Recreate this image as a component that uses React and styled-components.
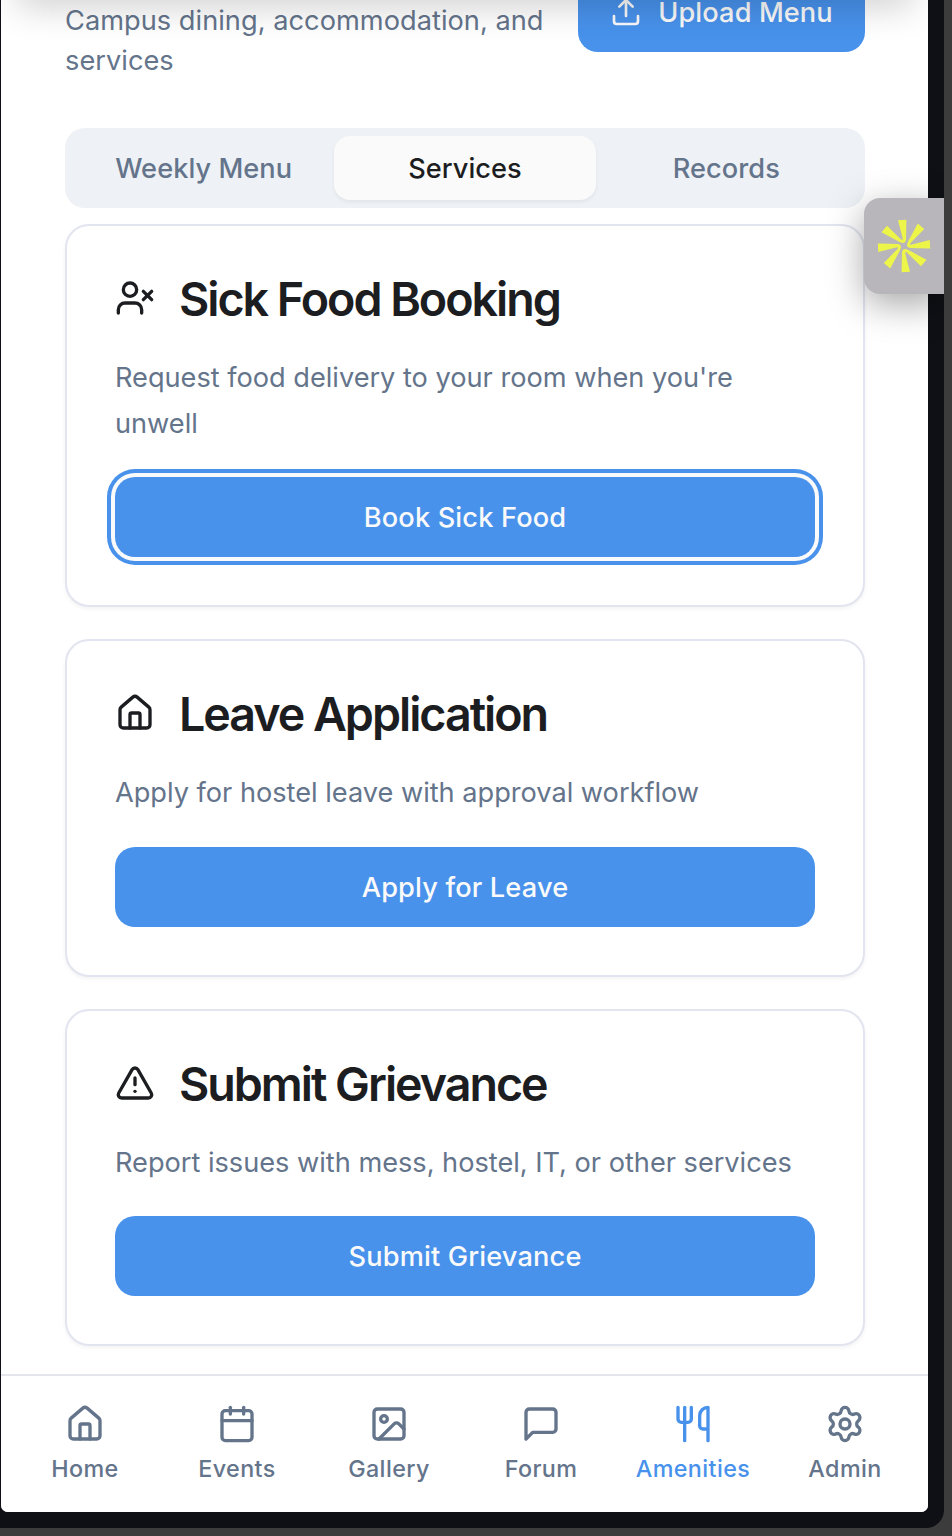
import React from "react";
import styled, { createGlobalStyle } from "styled-components";
import { House, Calendar, Image, Utensils, Settings, UserX, TriangleAlert, Upload } from "lucide-react";

const Global = createGlobalStyle`
  *, *::before, *::after { box-sizing: border-box; }
  html, body { margin: 0; height: 1536px; overflow: hidden; background: #3c3c3c; }
  body { font-family: Inter, "Liberation Sans", sans-serif; -webkit-font-smoothing: antialiased; }
  button { font-family: inherit; cursor: pointer; }
`;

const Stage = styled.main`
  position: relative;
  width: 952px;
  height: 1536px;
  overflow: hidden;
`;

const Device = styled.div`
  width: 944px;
  height: 1528px;
  padding: 0 16px 16px 1px;
  background: #0f1015;
  border-radius: 0 0 18px 0;
`;

const Screen = styled.div`
  position: relative;
  display: flex;
  flex-direction: column;
  height: 1512px;
  background: #fff;
  border-radius: 0 0 7px 7px;
  overflow: hidden;
`;

const HeaderShade = styled.div`
  position: absolute;
  top: -40px;
  left: 16px;
  width: 896px;
  height: 40px;
  box-shadow: 0 6px 36px rgba(0, 0, 0, 0.2);
`;

const Content = styled.div`
  flex: 1;
  padding: 0 63px 0 64px;
`;

const Intro = styled.header`
  display: flex;
  justify-content: space-between;
  align-items: flex-start;
  height: 128px;
`;

const Subtitle = styled.p`
  margin: 0;
  padding-top: 1px;
  width: 490px;
  font-size: 27.2px;
  line-height: 40px;
  letter-spacing: 0.03px;
  color: #64748b;
`;

const UploadButton = styled.button`
  display: flex;
  align-items: center;
  justify-content: center;
  gap: 16px;
  width: 287px;
  height: 80px;
  margin-top: -28px;
  padding: 0;
  border: 0;
  border-radius: 20px;
  background: #4892ec;
  color: #fafafa;
  font-size: 27.2px;
  font-weight: 500;
  line-height: 24px;
`;

const Tabs = styled.nav`
  display: grid;
  grid-template-columns: repeat(3, 1fr);
  height: 80px;
  padding: 8px;
  margin-bottom: 16px;
  border-radius: 20px;
  background: #eef1f6;
`;

const Tab = styled.button`
  padding: 0;
  border: 0;
  border-radius: 16px;
  font-size: 27.2px;
  font-weight: 500;
  background: ${(p) => (p.$active ? "#fafafa" : "transparent")};
  color: ${(p) => (p.$active ? "#1c1d21" : "#64748b")};
  box-shadow: ${(p) => (p.$active ? "0 2px 4px rgba(0, 0, 0, 0.06)" : "none")};
`;

const Cards = styled.div`
  display: flex;
  flex-direction: column;
  gap: 32px;
`;

const Card = styled.section`
  padding: 48px;
  border: 2px solid #e2e5f0;
  border-radius: 24px;
  background: #fff;
  box-shadow: 0 2px 4px rgba(0, 0, 0, 0.05);
`;

const CardTitle = styled.h2`
  display: flex;
  align-items: center;
  gap: 24px;
  height: 48px;
  margin: 0 0 32px;
  font-size: 46.6px;
  line-height: 48px;
  font-weight: 600;
  color: #1c1d21;
`;

const Label = styled.span`
  padding-top: ${(p) => p.$drop || 0}px;
  letter-spacing: ${(p) => p.$track || 0}px;
  white-space: nowrap;
`;

const Description = styled.p`
  margin: 0 0 31px;
  padding-top: 1px;
  font-size: 27.2px;
  line-height: 45.5px;
  letter-spacing: -0.02px;
  color: #64748b;
`;

const Action = styled.button`
  display: block;
  width: 100%;
  height: 80px;
  padding: 1px 0 0;
  border: 0;
  border-radius: 20px;
  background: #4892ec;
  color: #fafafa;
  font-size: 27.2px;
  font-weight: 500;
  box-shadow: ${(p) => (p.$focused ? "0 0 0 4px #fafafa, 0 0 0 8px #4892ec" : "none")};
`;

const BottomBar = styled.nav`
  display: grid;
  grid-template-columns: repeat(6, 152px);
  height: 138px;
  padding: 28px 7px 0 8px;
  border-top: 2px solid #e5e6ec;
  background: #fff;
`;

const NavItem = styled.a`
  display: flex;
  flex-direction: column;
  align-items: center;
  gap: 9px;
  font-size: 23.3px;
  line-height: 32px;
  font-weight: 500;
  color: ${(p) => (p.$active ? "#4892ec" : "#64748b")};
`;

const Widget = styled.aside`
  position: absolute;
  top: 198px;
  left: 864px;
  display: flex;
  align-items: center;
  justify-content: center;
  width: 80px;
  height: 96px;
  border-radius: 16px 0 0 16px;
  background: #b8b6ba;
  box-shadow: 0 10px 36px rgba(0, 0, 0, 0.35);
  clip-path: inset(-60px 0 -80px -60px);
`;

const MessageIcon = () => (
  <svg width="40" height="40" viewBox="0 0 24 24" fill="none" stroke="currentColor" strokeWidth="2" strokeLinecap="round" strokeLinejoin="round">
    <path d="M21 15a2 2 0 0 1-2 2H7l-4 4V5a2 2 0 0 1 2-2h14a2 2 0 0 1 2 2z" />
  </svg>
);

const Burst = () => (
  <svg width="54" height="54" viewBox="0 0 54 54" fill="#edf549">
    {[0, 90, 180, 270].map((a) => (
      <path key={a} transform={`rotate(${a} 27 27)`} d="M21 1.300 L29.400 0.800 L29 20.800 Q28.500 24.200 25.500 24 L22.500 22.900 L4.500 13.200 L10 6.800 L23.800 20.300 Q26.200 22 25.600 19 Z" />
    ))}
  </svg>
);

const services = [
  { icon: UserX, title: "Sick Food Booking", text: "Request food delivery to your room when you're unwell", action: "Book Sick Food", focused: true },
  { icon: House, title: "Leave Application", text: "Apply for hostel leave with approval workflow", action: "Apply for Leave" },
  { icon: TriangleAlert, title: "Submit Grievance", text: "Report issues with mess, hostel, IT, or other services", action: "Submit Grievance" },
];

const destinations = [
  ["Home", House],
  ["Events", Calendar],
  ["Gallery", Image],
  ["Forum", MessageIcon],
  ["Amenities", Utensils],
  ["Admin", Settings],
];

export default function App() {
  return (
    <Stage>
      <Global />
      <Device>
        <Screen>
          <Content>
            <Intro>
              <Subtitle>Campus dining, accommodation, and services</Subtitle>
              <UploadButton>
                <Upload size={32} />
                <Label $track={0.1} $drop={1}>Upload Menu</Label>
              </UploadButton>
            </Intro>
            <Tabs>
              {["Weekly Menu", "Services", "Records"].map((name) => (
                <Tab key={name} $active={name === "Services"}>
                  <Label $track={0.05}>{name}</Label>
                </Tab>
              ))}
            </Tabs>
            <Cards>
              {services.map(({ icon: Icon, title, text, action, focused }) => (
                <Card key={title}>
                  <CardTitle>
                    <Icon size={40} />
                    <Label $track={-2.02} $drop={2}>{title}</Label>
                  </CardTitle>
                  <Description>{text}</Description>
                  <Action $focused={focused}>
                    <Label $track={0.15}>{action}</Label>
                  </Action>
                </Card>
              ))}
            </Cards>
          </Content>
          <BottomBar>
            {destinations.map(([name, Icon]) => (
              <NavItem key={name} $active={name === "Amenities"}>
                <Icon size={40} />
                <Label $track={0.4}>{name}</Label>
              </NavItem>
            ))}
          </BottomBar>
          <HeaderShade />
        </Screen>
      </Device>
      <Widget>
        <Burst />
      </Widget>
    </Stage>
  );
}
